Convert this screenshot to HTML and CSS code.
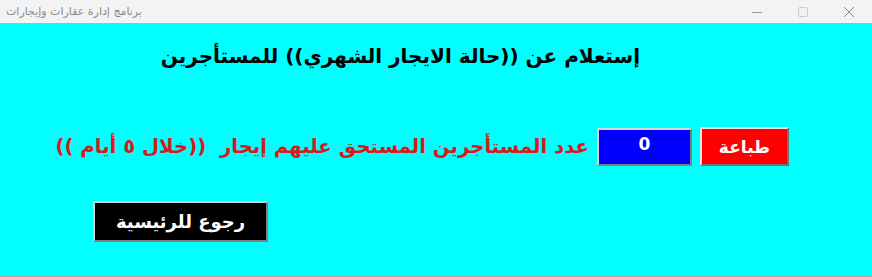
FILE: index.html
```html
<!DOCTYPE html>
<html lang="ar">
<head>
    <meta charset="UTF-8">
    <title>برنامج إدارة عقارات وإيجارات</title>
    <link rel="stylesheet" href="styles.css">
</head>
<body>
    <div class="window">
        <div class="titlebar">
            <div class="title">برنامج إدارة عقارات وإيجارات</div>
            <div class="controls">
                <span class="ctl">
                    <svg width="12" height="12" viewBox="0 0 12 12"><path d="M1 6.5h10" stroke="#999" stroke-width="1"/></svg>
                </span>
                <span class="ctl">
                    <svg width="12" height="12" viewBox="0 0 12 12"><rect x="1.5" y="1.5" width="9" height="9" rx="1.5" fill="none" stroke="#ccc" stroke-width="1"/></svg>
                </span>
                <span class="ctl">
                    <svg width="12" height="12" viewBox="0 0 12 12"><path d="M1 1l10 10M11 1L1 11" stroke="#888" stroke-width="1"/></svg>
                </span>
            </div>
        </div>
        <div class="form">
            <div class="heading">إستعلام عن ((حالة الايجار الشهري)) للمستأجرين</div>
            <div class="row">
                <button class="btn print">طباعة</button>
                <div class="count">0</div>
                <div class="label">عدد المستأجرين المستحق عليهم إيجار&nbsp; ((خلال ٥ أيام ))</div>
            </div>
            <div class="back-row">
                <button class="btn back">رجوع للرئيسية</button>
            </div>
        </div>
    </div>
</body>
</html>
```

FILE: styles.css
```css
body {
    margin: 0;
    font-family: "DejaVu Sans", Arial, sans-serif;
    background-color: #fff;
}
.window {
    width: 872px;
    height: 277px;
    display: flex;
    flex-direction: column;
}
.titlebar {
    height: 23px;
    background-color: #f3f3f3;
    display: flex;
    justify-content: space-between;
    align-items: center;
}
.title {
    padding-left: 6px;
    font-size: 11px;
    color: #8a8a8a;
}
.controls {
    display: flex;
    height: 100%;
}
.ctl {
    width: 46px;
    display: flex;
    justify-content: center;
    align-items: center;
}
.form {
    flex: 1;
    background-color: #00ffff;
    border-bottom: 1px solid #9aa;
    direction: rtl;
}
.heading {
    margin-top: 21px;
    margin-right: 232px;
    height: 32px;
    font-size: 20px;
    font-weight: bold;
    color: #000;
}
.row {
    display: flex;
    align-items: center;
    margin-top: 51px;
    margin-right: 83px;
}
.btn {
    font-family: inherit;
    font-weight: bold;
    cursor: pointer;
    border: 2px solid;
    border-color: #e8e8e8 #707070 #707070 #e8e8e8;
}
.print {
    width: 89px;
    height: 39px;
    background-color: #ff0000;
    color: #fff;
    font-size: 17px;
}
.count {
    width: 91px;
    height: 34px;
    margin-right: 8px;
    background-color: #0000ff;
    border: 2px solid;
    border-color: #d8d8d8 #808080 #808080 #d8d8d8;
    color: #fff;
    font-size: 17px;
    font-weight: bold;
    text-align: center;
    line-height: 28px;
}
.label {
    margin-right: 8px;
    font-size: 19.7px;
    font-weight: bold;
    color: #d41c1c;
    white-space: nowrap;
}
.back-row {
    margin-top: 35px;
    margin-right: 604px;
}
.back {
    width: 175px;
    height: 41px;
    background-color: #000;
    color: #fff;
    font-size: 18px;
    border-color: #d0d0d0 #808080 #808080 #d0d0d0;
}
```
